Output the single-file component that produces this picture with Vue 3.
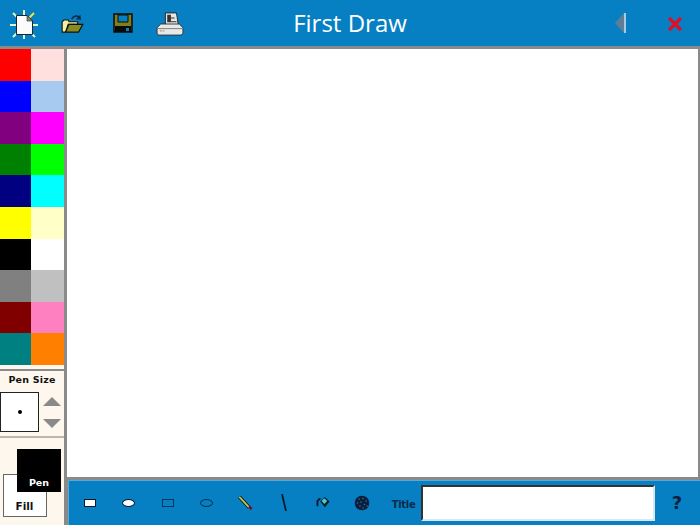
<script setup>
const colors = [
  ['#ff0000', '#ffe0de'],
  ['#0000ff', '#a6caf0'],
  ['#800080', '#ff00ff'],
  ['#008000', '#00ff00'],
  ['#000080', '#00ffff'],
  ['#ffff00', '#ffffc8'],
  ['#000000', '#ffffff'],
  ['#808080', '#c0c0c0'],
  ['#800000', '#ff80c0'],
  ['#008080', '#ff8000'],
].flat()
const rays = [
  [24, 8, 24, 13], [24, 32, 24, 37], [10, 23, 16, 23], [33, 23, 38, 23],
  [13, 11, 17, 15], [34, 11, 29, 16], [13, 35, 17, 31], [35, 35, 32, 32],
]
</script>

<template>
  <div class="app">
    <header class="top">
      <div class="left-tools">
        <svg class="ic-new" width="46" height="42" viewBox="0 0 46 42">
          <g stroke-width="2">
            <line v-for="(r, i) in rays" :key="i" :x1="r[0]" :y1="r[1]" :x2="r[2]" :y2="r[3]" :stroke="i === 5 ? '#e8e840' : '#d8f8d0'" />
          </g>
          <path d="M16.500 13.500h10.500l5.500 5.500v13.500H16.500z" fill="#fbfbfb" stroke="#222" stroke-width="1" />
          <path d="M27 13.500v5.500h5.500z" fill="#8a8a8a" stroke="#222" stroke-width=".6" />
        </svg>
        <svg class="ic-open" width="23" height="19" viewBox="0 0 26 22">
          <path d="M12 6c2-4 7-5 9-2" fill="none" stroke="#062a4a" stroke-width="1.800" />
          <path d="M22 1l1 6-6-1z" fill="#062a4a" />
          <path d="M1 9l2-2h5l1 2h10v3H8l-3 9H1z" fill="#f4f0a0" stroke="#10100a" stroke-width="1.300" />
          <path d="M5 21l4-9h16l-5 9z" fill="#8a8a22" stroke="#10100a" stroke-width="1.300" />
        </svg>
        <svg class="ic-save" width="20" height="20" viewBox="0 0 20 20">
          <path d="M1 1h18v18H1z" fill="#7f7f1c" stroke="#0a0a0a" stroke-width="1.500" />
          <path d="M5 2h10v7H5z" fill="#0680c2" stroke="#0a0a0a" />
          <path d="M2 13h16v6H2z" fill="#0a0a0a" />
          <path d="M13 15h3v3h-3z" fill="#0680c2" />
        </svg>
        <svg class="ic-print" width="28" height="24" viewBox="0 0 30 26">
          <path d="M10 1h12l2 13H10z" fill="#e6e6e6" stroke="#222" />
          <path d="M12 3h4v3h4v1h-4v3h6v1h-10z" fill="#333" />
          <path d="M5 13h20l4 4v6l-2 2H2l-1-2v-6z" fill="#e8e8e8" stroke="#333" />
          <path d="M1 18h27" stroke="#777" />
          <path d="M4 20h2v1H4z" fill="#d06020" />
          <path d="M7 20h2v1H7z" fill="#60a040" />
        </svg>
      </div>
      <h1 class="title">First Draw</h1>
      <div class="right-tools">
        <span class="back"><i class="tri"></i><i class="bar"></i></span>
        <svg class="ic-close" width="16" height="16" viewBox="0 0 16 16">
          <path d="M2 2l12 12M14 2L2 14" stroke="#dc1028" stroke-width="3.400" />
        </svg>
      </div>
    </header>

    <div class="body">
      <aside class="side">
        <div class="palette">
          <span v-for="(c, i) in colors" :key="i" class="swatch" :style="{ background: c }"></span>
        </div>
        <section class="pen-size">
          <div class="ps-label">Pen Size</div>
          <div class="ps-row">
            <div class="ps-box"><i class="dot"></i></div>
            <div class="arrows">
              <i class="up"></i>
              <i class="down"></i>
            </div>
          </div>
        </section>
        <section class="pens">
          <div class="fill-box">Fill</div>
          <div class="pen-box">Pen</div>
        </section>
      </aside>

      <main class="work">
        <div class="canvas"></div>
        <footer class="bottom">
          <div class="shape"><i class="s-rect"></i></div>
          <div class="shape"><i class="s-oval"></i></div>
          <div class="shape"><i class="s-rect2"></i></div>
          <div class="shape"><i class="s-oval2"></i></div>
          <div class="shape">
            <svg width="15" height="14" viewBox="0 0 16 16">
              <path d="M1 1l11 12" stroke="#111" stroke-width="4" />
              <path d="M1 1l11 12" stroke="#c8c850" stroke-width="2" />
              <path d="M12 12l3 3" stroke="#701030" stroke-width="3" />
            </svg>
          </div>
          <div class="shape">
            <svg width="6" height="17" viewBox="0 0 6 17"><path d="M1 0l4 17" stroke="#061524" stroke-width="1.700" /></svg>
          </div>
          <div class="shape">
            <svg width="16" height="13" viewBox="0 0 16 14">
              <path d="M1 11V5l3-3 2 1-3 3v5z" fill="#0a1a2a" />
              <path d="M5 6l5-5 5 5-5 6z" fill="#0a1a2a" />
              <path d="M6.500 5.500l3-3 3 3-3 3z" fill="#40d0d0" />
            </svg>
          </div>
          <div class="shape">
            <svg width="16" height="16" viewBox="0 0 16 16">
              <circle cx="8" cy="8" r="7.300" fill="#0a1f3c" />
              <g fill="#3a6fa0">
                <circle cx="5" cy="4" r=".8" /><circle cx="9" cy="3.500" r=".8" /><circle cx="12" cy="6" r=".8" />
                <circle cx="3.500" cy="8" r=".8" /><circle cx="7" cy="7" r=".8" /><circle cx="10.500" cy="9.500" r=".8" />
                <circle cx="6" cy="11" r=".8" /><circle cx="9" cy="13" r=".8" /><circle cx="13" cy="11" r=".8" />
              </g>
            </svg>
          </div>
          <span class="title-label">Title</span>
          <input class="title-input" type="text" />
          <span class="help">?</span>
        </footer>
      </main>
    </div>
  </div>
</template>

<style>
html, body { margin: 0; padding: 0; overflow: hidden; }
</style>

<style scoped>
.app {
  width: 700px;
  height: 525px;
  display: flex;
  flex-direction: column;
  background: #fdf7ee;
  font-family: "DejaVu Sans", sans-serif;
  overflow: hidden;
}
.top {
  height: 46px;
  flex: none;
  background: #0680c2;
  border-bottom: 3px solid #8a8a8a;
  display: flex;
  align-items: center;
  position: relative;
}
.left-tools {
  display: flex;
  align-items: center;
  width: 200px;
  flex: none;
}
.ic-open { margin-left: 15px; }
.ic-save { margin-left: 29px; }
.ic-print { margin-left: 23px; margin-top: 2px; }
.title {
  flex: 1;
  margin: 0;
  padding-right: 200px;
  text-align: center;
  color: #fff;
  font-family: "Open Sans", sans-serif;
  font-weight: 500;
  font-size: 24px;
  line-height: 46px;
  white-space: nowrap;
}
.right-tools {
  display: flex;
  align-items: center;
  width: 100px;
  flex: none;
  position: absolute;
  right: 0;
  top: 0;
  height: 46px;
}
.back {
  display: flex;
  align-items: center;
  margin-left: 15px;
}
.tri {
  width: 0;
  height: 0;
  border-top: 10px solid transparent;
  border-bottom: 10px solid transparent;
  border-right: 9px solid #5f7d96;
}
.bar {
  width: 2px;
  height: 20px;
  background: #a8cbe4;
}
.ic-close { margin-left: 41px; margin-top: 1px; }

.body {
  flex: 1;
  display: flex;
  min-height: 0;
}
.side {
  width: 64px;
  flex: none;
  border-right: 3px solid #8a8a8a;
  display: flex;
  flex-direction: column;
}
.palette {
  display: grid;
  grid-template-columns: 31px 33px;
  grid-auto-rows: 31.6px;
  height: 316px;
}
.swatch { display: block; }
.pen-size {
  margin-top: 4px;
  height: 65px;
  border-top: 2px solid #8a8a8a;
  border-bottom: 2px solid #b8b8b0;
  display: flex;
  flex-direction: column;
}
.ps-label {
  font-size: 9.500px;
  font-weight: 700;
  line-height: 12px;
  text-align: center;
  margin-top: 3px;
  color: #111;
  white-space: nowrap;
  letter-spacing: 0.2px;
}
.ps-row {
  display: flex;
  margin-top: 6px;
}
.ps-box {
  width: 37px;
  height: 38px;
  background: #fff;
  border: 1px solid #222;
  display: flex;
  align-items: center;
  justify-content: center;
}
.dot {
  width: 4px;
  height: 4px;
  border-radius: 50%;
  background: #000;
}
.arrows {
  display: flex;
  flex-direction: column;
  margin-left: 4px;
  gap: 13px;
  padding-top: 5px;
}
.up, .down {
  display: block;
  width: 0;
  height: 0;
  border-left: 9px solid transparent;
  border-right: 9px solid transparent;
}
.up { border-bottom: 9px solid #8a8a8a; }
.down { border-top: 9px solid #8a8a8a; }
.pens {
  position: relative;
  flex: 1;
}
.fill-box, .pen-box {
  position: absolute;
  box-sizing: border-box;
  font-weight: 700;
  text-align: center;
}
.fill-box {
  left: 3px;
  top: 36px;
  width: 44px;
  height: 43px;
  background: #fff;
  border: 1px solid #666;
  color: #111;
  padding-top: 24px;
  padding-right: 1px;
  line-height: 14px;
  font-size: 10.500px;
}
.pen-box {
  left: 17px;
  top: 11px;
  width: 44px;
  height: 43px;
  background: #000;
  color: #fff;
  padding: 27px 0 0 0;
  line-height: 14px;
  font-size: 9.500px;
}

.work {
  flex: 1;
  min-width: 0;
  display: flex;
  flex-direction: column;
}
.canvas {
  flex: 1;
  background: #fff;
  border-right: 2px solid #8a8a8a;
}
.bottom {
  height: 45px;
  flex: none;
  border-top: 3px solid #8a8a8a;
  border-left: 1px solid #8a8a8a;
  background: #0680c2;
  box-shadow: inset 0 1px 0 #5aa8d8, inset 1px 0 0 #5aa8d8;
  display: flex;
  align-items: center;
  padding-left: 2.500px;
}
.shape {
  width: 38.900px;
  flex: none;
  display: flex;
  justify-content: center;
  align-items: center;
}
.s-rect, .s-rect2 {
  display: block;
  width: 10px;
  height: 6px;
  border: 1px solid #0a1a2a;
}
.s-rect { background: #fff; }
.s-rect2 { border-color: #063458; }
.s-oval, .s-oval2 {
  display: block;
  width: 11px;
  height: 6px;
  border: 1px solid #063458;
  border-radius: 50%;
}
.s-oval { background: #fff; border-color: #0a1a2a; }
.title-label {
  margin-left: 10px;
  margin-top: 3px;
  font-size: 10px;
  font-weight: 700;
  letter-spacing: -0.3px;
  color: #0a2a4a;
  width: 29px;
  flex: none;
}
.title-input {
  width: 234px;
  height: 36px;
  box-sizing: border-box;
  flex: none;
  background: #fff;
  border: 2px solid;
  border-color: #333 #d8e8f0 #d8e8f0 #333;
  padding: 0;
  margin: 0;
  outline: none;
}
.help {
  margin-left: 17px;
  font-size: 18px;
  font-weight: 700;
  color: #0a1f3c;
}
</style>
